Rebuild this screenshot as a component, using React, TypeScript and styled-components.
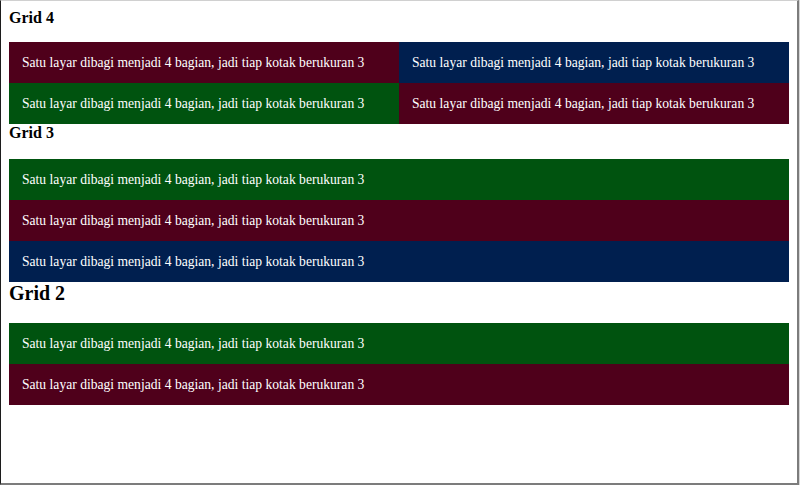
import React from "react";
import styled, { createGlobalStyle } from "styled-components";

const GlobalStyle = createGlobalStyle`
  html, body {
    margin: 0;
    padding: 0;
    background: #d6d6d6;
  }
  body {
    font-family: "Liberation Serif", "Times New Roman", serif;
  }
`;

const Frame = styled.div`
  box-sizing: border-box;
  width: 799px;
  height: 485px;
  overflow: hidden;
  background: #ffffff;
  border-top: 1px solid #d0d0d0;
  border-left: 1px solid #1c1c1c;
  border-right: 2px solid #7c7c7c;
  border-bottom: 2px solid #7c7c7c;
  padding: 8px;
  color: #000;
`;

const Section = styled.section`
  display: flex;
  flex-direction: column;
`;

const Title = styled.h4<{ $size: number; $gap: number }>`
  margin: 0 0 ${(p) => p.$gap}px;
  font-size: ${(p) => p.$size}px;
  line-height: ${(p) => Math.round(p.$size * 1.15)}px;
  font-weight: bold;
`;

const Grid = styled.div<{ $cols: number }>`
  display: grid;
  grid-template-columns: repeat(${(p) => p.$cols}, 1fr);
`;

const tones: Record<string, string> = {
  maroon: "#4f001b",
  green: "#00530f",
  navy: "#001f4f",
};

const Cell = styled.div<{ $tone: string }>`
  background: ${(p) => tones[p.$tone]};
  color: #ffffff;
  font-size: 13.6px;
  line-height: 17px;
  padding: 12px 12px 12px 13px;
  white-space: nowrap;
  overflow: hidden;
`;

const TEXT = "Satu layar dibagi menjadi 4 bagian, jadi tiap kotak berukuran 3";

const sections = [
  { title: "Grid 4", size: 16, gap: 15, cols: 2, tones: ["maroon", "navy", "green", "maroon"] },
  { title: "Grid 3", size: 16, gap: 17, cols: 1, tones: ["green", "maroon", "navy"] },
  { title: "Grid 2", size: 20, gap: 18, cols: 1, tones: ["green", "maroon"] },
];

export default function App() {
  return (
    <>
      <GlobalStyle />
      <Frame>
        {sections.map((s) => (
          <Section key={s.title}>
            <Title $size={s.size} $gap={s.gap}>
              {s.title}
            </Title>
            <Grid $cols={s.cols}>
              {s.tones.map((t, i) => (
                <Cell key={i} $tone={t}>
                  {TEXT}
                </Cell>
              ))}
            </Grid>
          </Section>
        ))}
      </Frame>
    </>
  );
}
